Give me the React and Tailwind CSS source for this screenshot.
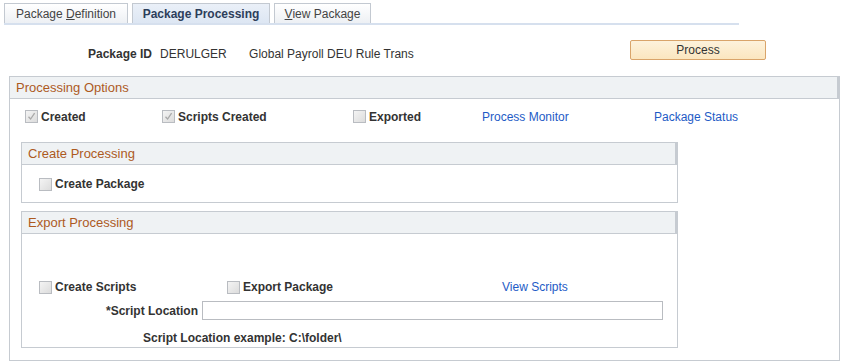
import React from "react";

function Box({ checked, className = "" }) {
  return (
    <span
      className={
        "inline-flex h-[13px] w-[13px] shrink-0 items-center justify-center border border-[#b9bcc1] bg-gradient-to-br from-[#f4f4f4] to-[#dcdcdc] " +
        className
      }
    >
      {checked && (
        <svg width="9" height="9" viewBox="0 0 9 9">
          <path d="M1.5 4.8 L3.6 7 L7.6 1.2" fill="none" stroke="#a9a9a9" strokeWidth="1.3" />
        </svg>
      )}
    </span>
  );
}

function Check({ label, checked, width }) {
  return (
    <div className="flex items-center gap-[3px]" style={{ width }}>
      <Box checked={checked} />
      <span className="font-bold text-[#333]">{label}</span>
    </div>
  );
}

function Section({ title, children, className = "" }) {
  return (
    <div className={"border border-[#c6cbd1] " + className}>
      <div className="flex h-[22px] items-center border-b border-r-2 border-[#c6cbd1] bg-[#eff2f4] pl-[6px] text-[13px] text-[#ad5a1f]">
        {title}
      </div>
      {children}
    </div>
  );
}

export default function App() {
  return (
    <div className="h-[364px] w-[844px] bg-white text-[12px] text-[#333]" style={{ fontFamily: '"Liberation Sans", Arial, sans-serif' }}>
      {/* TABS */}
      <div className="ml-[4px] flex w-[735px] gap-[4px] border-b-2 border-[#d6e0ee] pt-[3px]">
        <div className="flex h-[20px] w-[124px] items-center justify-center border border-b-0 border-[#c3c9d1] bg-gradient-to-b from-white to-[#edf0f4] text-[#444]">
          <span>
            Package <span className="underline">D</span>efinition
          </span>
        </div>
        <div className="flex h-[20px] w-[138px] items-center justify-center border border-b-0 border-[#c3c9d1] bg-gradient-to-b from-[#eaf0f8] to-[#dde6f3] font-bold text-[#2d3e5b]">
          Package Processing
        </div>
        <div className="flex h-[20px] w-[97px] items-center justify-center border border-b-0 border-[#c3c9d1] bg-gradient-to-b from-white to-[#edf0f4] text-[#444]">
          <span>
            <span className="underline">V</span>iew Package
          </span>
        </div>
      </div>

      {/* PACKAGE ID */}
      <div className="mt-[15px] flex h-[20px] items-center">
        <span className="ml-[88px] mt-[8px] font-bold">Package ID</span>
        <span className="ml-[8px] mt-[8px] w-[89px]">DERULGER</span>
        <span className="mt-[8px] w-[381px]">Global Payroll DEU Rule Trans</span>
        <button className="flex h-[20px] w-[136px] items-center justify-center rounded-[2px] border border-[#d9a46a] bg-gradient-to-b from-[#fdf2dc] to-[#fbe6bf] text-[12px] text-[#333]">
          Process
        </button>
      </div>

      {/* PROCESSING OPTIONS */}
      <Section title="Processing Options" className="ml-[9px] mt-[16px] w-[831px] pb-[12px]">
        <div className="flex h-[35px] items-center pl-[15px]">
          <Check label="Created" checked width={137} />
          <Check label="Scripts Created" checked width={191} />
          <Check label="Exported" width={129} />
          <a className="w-[172px] text-[#1e5bc6]">Process Monitor</a>
          <a className="text-[#1e5bc6]">Package Status</a>
        </div>

        <Section title="Create Processing" className="ml-[11px] mt-[8px] w-[657px]">
          <div className="flex h-[37px] items-start pl-[17px] pt-[10px]">
            <Check label="Create Package" width={200} />
          </div>
        </Section>

        <Section title="Export Processing" className="ml-[11px] mt-[8px] w-[657px]">
          <div className="flex h-[113px] flex-col pl-[17px] pt-[46px]">
            <div className="flex h-[14px] items-center">
              <Check label="Create Scripts" width={188} />
              <Check label="Export Package" width={275} />
              <a className="text-[#1e5bc6]">View Scripts</a>
            </div>
            <div className="mt-[7px] flex h-[19px] items-center">
              <span className="w-[159px] text-right font-bold">*Script Location</span>
              <input className="ml-[4px] h-[19px] w-[461px] border border-[#b9bcc1] bg-white outline-none" />
            </div>
            <div className="mt-[9px] pl-[104px] font-bold">Script Location example: C:\folder\</div>
          </div>
        </Section>
      </Section>
    </div>
  );
}
